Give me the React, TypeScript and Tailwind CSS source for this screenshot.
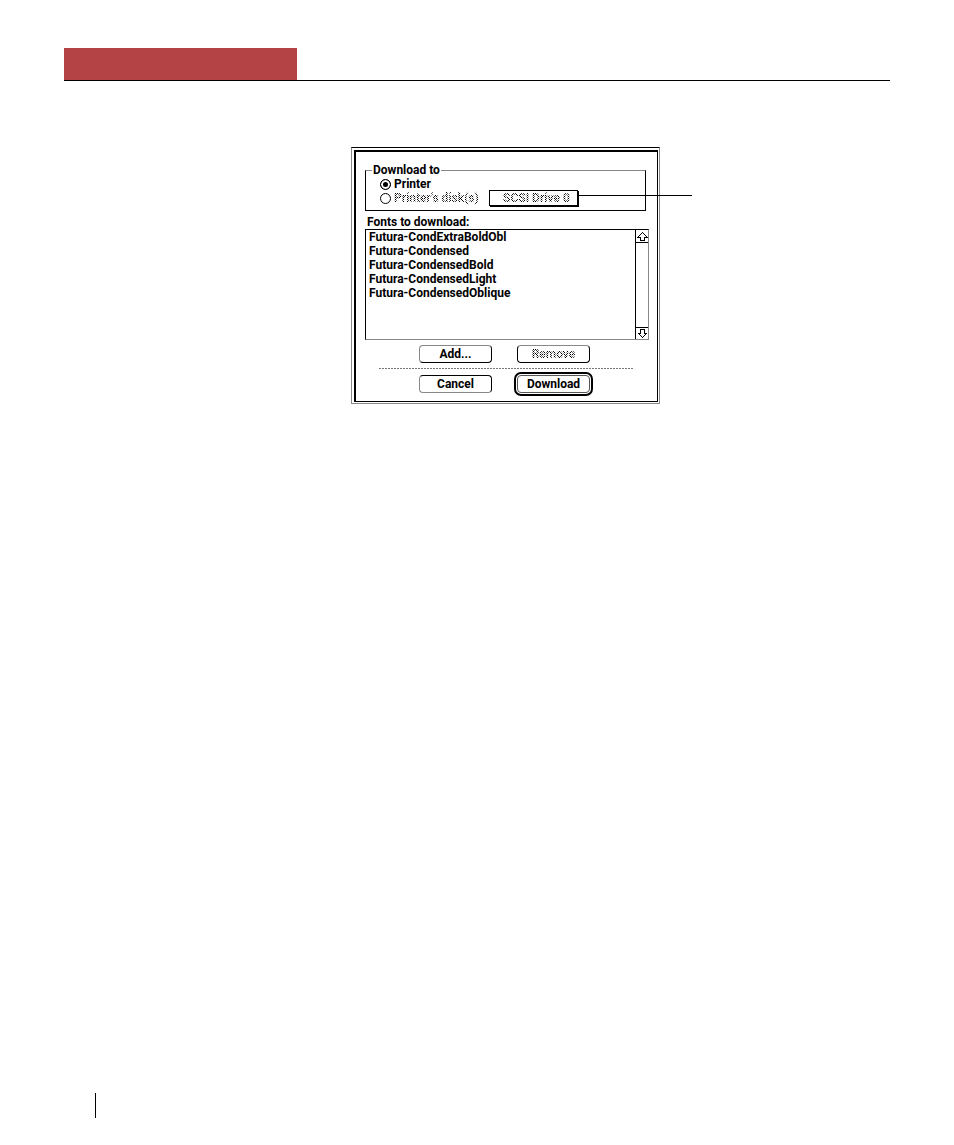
import React, { useState } from 'react';

const fonts = [
    'Futura-CondExtraBoldObl',
    'Futura-Condensed',
    'Futura-CondensedBold',
    'Futura-CondensedLight',
    'Futura-CondensedOblique',
];

// Checkerboard fill clipped to the glyphs, the classic dimmed look
const dimmed =
    'bg-clip-text text-transparent bg-[repeating-conic-gradient(#000_0%_25%,#fff_0%_50%)] bg-[length:2px_2px]';

const radioClass =
    'appearance-none size-[11px] shrink-0 rounded-full border border-black bg-white checked:bg-black checked:shadow-[inset_0_0_0_2px_#fff]';

interface ScrollArrowProps {
    down?: boolean;
}

const ScrollArrow: React.FC<ScrollArrowProps> = ({ down }) => (
    <button
        type="button"
        aria-label={down ? 'Scroll down' : 'Scroll up'}
        className="flex h-[13px] w-full items-center justify-center last:h-[11px]"
    >
        <svg width="11" height="9" viewBox="0 0 11 9" className={down ? 'rotate-180' : ''} shapeRendering="crispEdges">
            <path d="M5.5 0.5 L10 5 H7.5 V8.5 H3.5 V5 H1 Z" fill="#fff" stroke="#000" strokeWidth="1" />
        </svg>
    </button>
);

const DownloadDialog: React.FC = () => {
    const [target, setTarget] = useState('printer');

    return (
        <section
            aria-label="Download fonts"
            className="relative w-[309px] border border-[#888] border-t-black bg-white pt-0.5 pr-px pb-px pl-0.5"
        >
            <form className="border-t-2 border-r border-b border-l-2 border-black pt-[11px] pr-2 pb-2 pl-[9px]">
                <fieldset className="mr-[3px] border border-black border-t-[#888] pb-[5px] pl-3.5">
                    <legend className="-ml-2 px-px leading-[14px]">Download to</legend>
                    <div className="flex h-3.5 items-center gap-[3px]">
                        <input
                            id="printer"
                            type="radio"
                            name="target"
                            className={radioClass}
                            checked={target === 'printer'}
                            onChange={() => setTarget('printer')}
                        />
                        <label htmlFor="printer">Printer</label>
                    </div>
                    <div className="flex h-3.5 items-center">
                        <input id="disk" type="radio" name="target" disabled className={radioClass} />
                        <label htmlFor="disk" className="ml-[3px] w-[95px]">
                            <span className={dimmed}>Printer's disk(s)</span>
                        </label>
                        <div className="h-4 w-[89px] border border-black bg-white shadow-[1px_1px_0_#000]">
                            <select
                                aria-label="Disk"
                                disabled
                                className={`block w-full appearance-none pl-[13px] leading-3.5 opacity-100 ${dimmed}`}
                            >
                                <option>SCSI Drive 0</option>
                            </select>
                        </div>
                    </div>
                </fieldset>

                <h2 id="fonts-label" className="mt-1 ml-0.5 leading-[14px]">
                    Fonts to download:
                </h2>
                <div className="flex h-[111px] border border-black border-r-[#888] border-b-[#888]">
                    <ul aria-labelledby="fonts-label" className="flex-1 pl-[3px]">
                        {fonts.map((font) => (
                            <li key={font} className="leading-[14px]">
                                {font}
                            </li>
                        ))}
                    </ul>
                    <div className="flex w-[13px] flex-col justify-between divide-y divide-black border-l border-black">
                        <ScrollArrow />
                        <div className="flex-1" />
                        <ScrollArrow down />
                    </div>
                </div>

                <div className="mt-[5px] grid grid-cols-[73px_73px] gap-x-[25px] pl-[54px]">
                    <button type="button" className="h-[18px] rounded-[4px] border border-black border-t-[#888] border-l-[#888]">
                        Add...
                    </button>
                    <button type="button" disabled className="h-[18px] rounded-[4px] border border-black border-t-[#888]">
                        <span className={dimmed}>Remove</span>
                    </button>
                </div>
                <hr className="mt-[5px] mr-4 ml-3.5 h-px border-0 bg-[repeating-linear-gradient(90deg,#777_0_2px,#fff_2px_3px)]" />
                <div className="mt-1.5 grid grid-cols-[73px_73px] gap-x-[25px] pl-[54px]">
                    <button type="button" className="h-[18px] rounded-[4px] border border-black border-b-[#888] border-l-[#888]">
                        Cancel
                    </button>
                    <button
                        type="submit"
                        className="h-[18px] rounded-[4px] border border-[#555] outline-2 outline-offset-1 outline-black"
                    >
                        Download
                    </button>
                </div>
            </form>
            {/* Callout line out of the disk menu */}
            <div aria-hidden="true" className="absolute top-[47px] left-[227px] h-px w-[113px] bg-black" />
        </section>
    );
};

const App: React.FC = () => {
    return (
        <div className="flex min-h-screen flex-col bg-white px-16 pt-12 pb-[27px] font-['Roboto',sans-serif] text-[12px] leading-[14px] font-bold text-black">
            <header className="border-b border-black">
                <div className="h-8 w-[233px] bg-[#b34344]" />
            </header>
            <main className="mt-[66px] pl-[287px]">
                <DownloadDialog />
            </main>
            <footer className="mt-auto ml-[31px] h-[25px] border-l border-black" />
        </div>
    );
};

export default App;
